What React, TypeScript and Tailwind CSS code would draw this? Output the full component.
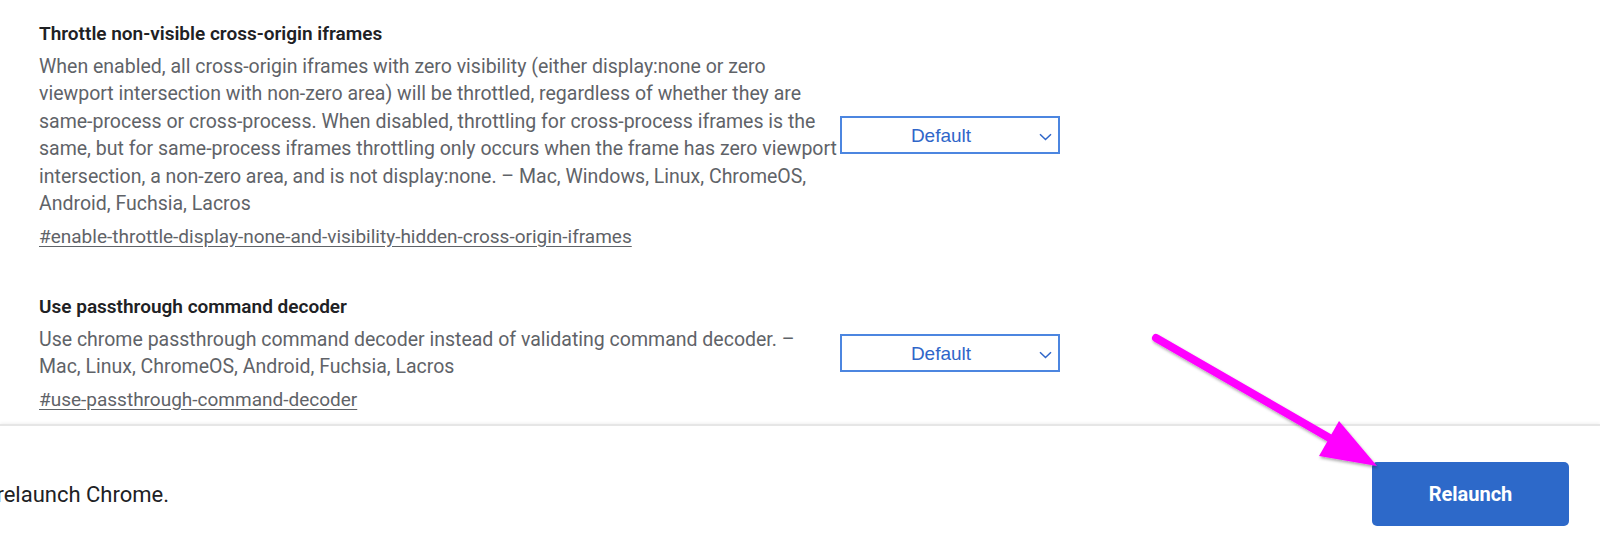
import React from "react";

const font = { fontFamily: "Roboto, 'Noto Sans', sans-serif" };

function Select() {
  return (
    <div className="relative flex h-[38px] w-[220px] shrink-0 items-center border-2 border-[#4c86e0] bg-white">
      <span
        className="w-full pr-[18px] text-center text-[19px] leading-none text-[#2f66c9]"
        style={{ fontFamily: "'Liberation Sans', Arial, sans-serif" }}
      >
        Default
      </span>
      <svg
        className="absolute right-[6px] top-[15px]"
        width="13"
        height="8"
        viewBox="0 0 13 8"
        fill="none"
      >
        <path d="M1 1.2 L6.5 6.5 L12 1.2" stroke="#2f66c9" strokeWidth="1.5" />
      </svg>
    </div>
  );
}

function Flag({
  title,
  desc,
  link,
}: {
  title: string;
  desc: string;
  link: string;
}) {
  return (
    <div className="flex items-center">
      <div className="w-[801px] shrink-0">
        <div className="text-[19px] font-semibold leading-[27.5px] text-[#202124]">
          {title}
        </div>
        <div className="mt-[5px] text-[19.5px] leading-[27.5px] text-[#5f6368]">
          {desc}
        </div>
        <div className="mt-[5px] text-[19px] leading-[27.5px] text-[#5f6368] underline underline-offset-[3px]">
          {link}
        </div>
      </div>
      <Select />
    </div>
  );
}

export default function App() {
  return (
    <div className="relative h-[546px] w-[1600px] overflow-hidden bg-white" style={font}>
      <div className="h-[424px] overflow-hidden pl-[39px] pt-[20px]">
        <Flag
          title="Throttle non-visible cross-origin iframes"
          desc="When enabled, all cross-origin iframes with zero visibility (either display:none or zero viewport intersection with non-zero area) will be throttled, regardless of whether they are same-process or cross-process. When disabled, throttling for cross-process iframes is the same, but for same-process iframes throttling only occurs when the frame has zero viewport intersection, a non-zero area, and is not display:none. – Mac, Windows, Linux, ChromeOS, Android, Fuchsia, Lacros"
          link="#enable-throttle-display-none-and-visibility-hidden-cross-origin-iframes"
        />
        <div className="mt-[43px]">
          <Flag
            title="Use passthrough command decoder"
            desc="Use chrome passthrough command decoder instead of validating command decoder. – Mac, Linux, ChromeOS, Android, Fuchsia, Lacros"
            link="#use-passthrough-command-decoder"
          />
        </div>
      </div>
      <div className="h-[122px] border-t-2 border-[#e6e6e6] shadow-[0_-1px_3px_rgba(0,0,0,0.06)]">
        <div className="flex items-center justify-between pr-[31px] pt-[36px]">
          <div className="flex w-[169px] justify-end overflow-hidden whitespace-nowrap text-[22px] text-[#202124]">
            Your changes will take effect the next time you relaunch Chrome.
          </div>
          <button className="h-[64px] w-[197px] rounded-[5px] bg-[#2d69c9] text-[20px] font-bold text-white">
            Relaunch
          </button>
        </div>
      </div>
      <svg
        className="pointer-events-none absolute left-0 top-0"
        width="1600"
        height="546"
        viewBox="0 0 1600 546"
      >
        <defs>
          <filter id="sh" x="-20%" y="-20%" width="140%" height="140%">
            <feDropShadow dx="1" dy="2" stdDeviation="1.5" floodColor="#000" floodOpacity="0.35" />
          </filter>
        </defs>
        <g filter="url(#sh)">
          <line x1="1156" y1="338" x2="1333" y2="440" stroke="#ff00ff" strokeWidth="8" strokeLinecap="round" />
          <polygon points="1377,466 1339,421 1319,456" fill="#ff00ff" />
        </g>
      </svg>
    </div>
  );
}
